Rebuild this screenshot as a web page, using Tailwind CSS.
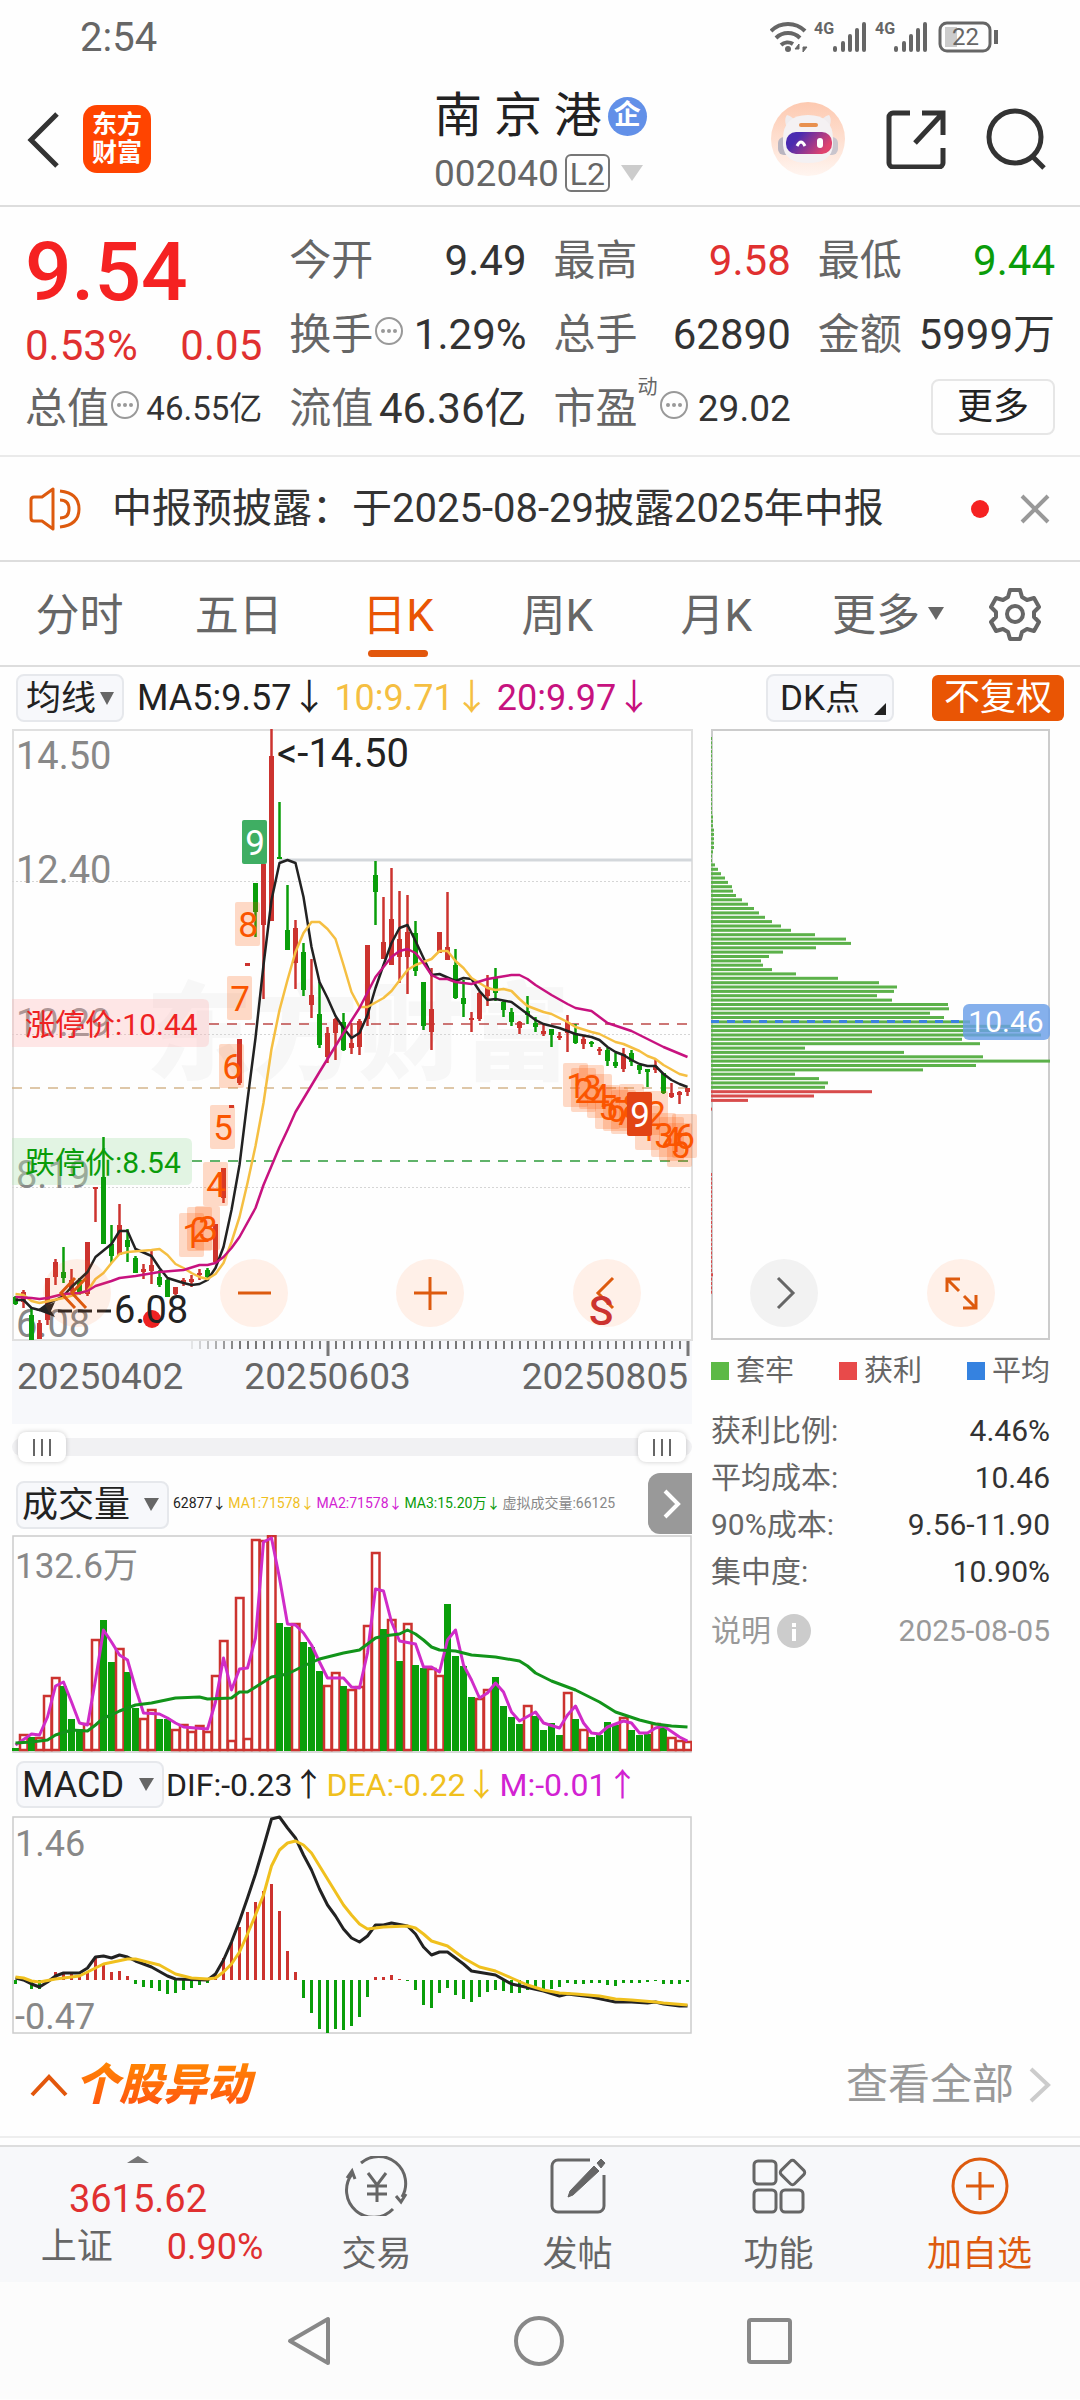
<!DOCTYPE html>
<html lang="zh-CN">
<head>
  <meta charset="UTF-8">
  <meta name="viewport" content="width=device-width, initial-scale=1.0">
  <title>南京港 002040</title>
  <script src="https://cdn.jsdelivr.net/npm/@tailwindcss/browser@4"></script>
</head>
<body class="bg-[#fefefe] text-[#333] font-['Roboto','Noto_Sans_CJK_SC',sans-serif]">

  <!-- status bar -->
  <div class="flex items-center justify-between h-[72px] pl-20 pr-20 pt-1 text-[#666]">
    <span class="text-[40px] leading-none">2:54</span>
    <svg class="w-[230px] h-10 mb-1" viewBox="770 16 230 40" fill="none" stroke="#666">
      <path d="M771 31a24 24 0 0 1 34 0M776 38a17 17 0 0 1 24 0M781 45a10 10 0 0 1 12 -1" stroke-width="4"/>
      <circle cx="788" cy="49" r="3" fill="#666" stroke="none"/>
      <path d="M799 44l-4 5h4zM803 52l4-5h-4z" fill="#666" stroke-width="1"/>
      <g stroke-width="4" stroke-linecap="round">
        <path d="M835 50v-2M843 50v-7M850 50V36M857 50V30M864 50V24"/>
        <path d="M896 50v-2M904 50v-7M911 50V36M918 50V30M925 50V24"/>
      </g>
      <g fill="#666" stroke="none" font-size="16" font-weight="700">
        <text x="814" y="34">4G</text>
        <text x="875" y="34">4G</text>
      </g>
      <rect x="945" y="27" width="12" height="20" fill="#ccc" stroke="none"/>
      <rect x="940" y="23" width="50" height="28" rx="7" stroke-width="3"/>
      <path d="M996 30v14" stroke-width="4"/>
      <text x="952" y="45" font-size="24" fill="#666" stroke="none">22</text>
    </svg>
  </div>

  <!-- header -->
  <header class="relative flex items-center justify-between h-[135px] px-6 border-b-2 border-[#ddd]">
    <div class="flex items-center">
      <button aria-label="返回" class="w-[59px]">
        <svg class="w-[38px] h-[60px]" viewBox="0 0 38 60" fill="none" stroke="#333" stroke-width="5"><path d="M33 5L7 31l26 26"/></svg>
      </button>
      <a href="#" class="w-[68px] h-[68px] rounded-[14px] bg-[#ff4400] text-white text-[25px] leading-[28px] font-bold text-center pt-[6px]">东方<br>财富</a>
    </div>
    <div class="absolute left-1/2 -translate-x-1/2 top-[16px] w-[212px]">
      <h1 class="flex items-center text-[48px] leading-[56px] text-[#222] whitespace-nowrap">南 京 港<span class="ml-[6px] w-[39px] h-[39px] shrink-0 rounded-full bg-[#6290e8] text-white text-[27px] leading-[37px] text-center font-bold">企</span></h1>
      <button class="flex items-center h-[58px] text-[37px] leading-none text-[#666]">
        002040
        <span class="ml-[6px] px-[3px] h-[38px] leading-[36px] text-[32px] border-2 border-[#777] rounded-md">L2</span>
        <svg class="ml-[11px] w-[22px] h-4" viewBox="0 0 22 16"><path d="M0 0h22L11 16z" fill="#ccc"/></svg>
      </button>
    </div>
    <div class="flex items-center gap-[40px]">
      <button aria-label="智能助手">
        <svg class="w-[76px] h-[76px]" viewBox="0 0 76 76">
          <defs>
            <linearGradient id="halo" x2="0" y2="1"><stop stop-color="#fdc9b0"/><stop offset="1" stop-color="#fff5f0"/></linearGradient>
            <linearGradient id="visor" x2="1" y2="0.4"><stop offset="0.3" stop-color="#4a2bb0"/><stop offset="1" stop-color="#e0436e"/></linearGradient>
          </defs>
          <circle cx="38" cy="38" r="37" fill="url(#halo)"/>
          <path d="M18 28c-4-6-3-12-1-14 4 1 7 4 9 7M58 28c4-6 3-12 1-14-4 1-7 4-9 7" fill="#f0ecee"/>
          <rect x="8" y="36" width="14" height="18" rx="6" fill="#b9b5c0"/><rect x="54" y="36" width="14" height="18" rx="6" fill="#c9c5cd"/>
          <path d="M13 38q0-24 25-24t25 24v6q-1 18-25 18T13 44z" fill="#f4f1f3"/>
          <rect x="29" y="22" width="19" height="4" rx="2" fill="#e8904f"/>
          <rect x="16" y="31" width="46" height="22" rx="10" fill="url(#visor)"/>
          <path d="M27 45q4-8 8 0" fill="none" stroke="#fff" stroke-width="3"/>
          <rect x="47" y="37" width="6" height="10" rx="3" fill="#fff"/>
        </svg>
      </button>
      <button aria-label="分享">
        <svg class="w-[60px] h-[60px]" viewBox="0 0 60 60" fill="none" stroke="#333" stroke-width="5"><path d="M24 4H7a4 4 0 0 0-4 4v46a4 4 0 0 0 4 4h46a4 4 0 0 0 4-4V39M36 4h21v22M56 5L29 34"/></svg>
      </button>
      <button aria-label="搜索" class="mr-1">
        <svg class="w-[62px] h-[62px] mr-1" viewBox="0 0 62 62" fill="none" stroke="#333" stroke-width="5"><circle cx="29" cy="29" r="26"/><path d="M46 48l12 12"/></svg>
      </button>
    </div>
  </header>

  <!-- quote -->
  <section class="relative grid grid-cols-4 gap-x-[27px] px-[25px] pt-[17px] h-[250px] border-b-2 border-[#eaeaea] text-[42px] leading-[74px] text-[#666]">
    <div class="flex flex-col">
      <div class="h-[93px] text-[82px] leading-[96px] font-medium text-[#f52222]">9.54</div>
      <div class="flex justify-between h-[55px] leading-[58px] text-[#e03030]"><span>0.53%</span><span>0.05</span></div>
      <div class="flex items-center justify-between whitespace-nowrap">
        <span class="flex items-center">总值<svg class="w-[30px] h-[30px] mb-2 ml-px" viewBox="0 0 30 30"><circle cx="15" cy="15" r="13" fill="none" stroke="#999" stroke-width="2"/><g fill="#999"><circle cx="9" cy="15" r="2"/><circle cx="15" cy="15" r="2"/><circle cx="21" cy="15" r="2"/></g></svg></span>
        <span class="text-[33px] text-[#333]">46.55亿</span>
      </div>
    </div>
    <div>
      <div class="flex justify-between"><span>今开</span><span class="text-[#333]">9.49</span></div>
      <div class="flex items-center justify-between">
        <span class="flex items-center">换手<svg class="w-[30px] h-[30px] mb-2 ml-px" viewBox="0 0 30 30"><circle cx="15" cy="15" r="13" fill="none" stroke="#999" stroke-width="2"/><g fill="#999"><circle cx="9" cy="15" r="2"/><circle cx="15" cy="15" r="2"/><circle cx="21" cy="15" r="2"/></g></svg></span>
        <span class="text-[#333]">1.29%</span>
      </div>
      <div class="flex justify-between whitespace-nowrap"><span>流值</span><span class="text-[#333]">46.36亿</span></div>
    </div>
    <div>
      <div class="flex justify-between"><span>最高</span><span class="text-[#e03030]">9.58</span></div>
      <div class="flex justify-between"><span>总手</span><span class="text-[#333]">62890</span></div>
      <div class="flex items-center justify-between">
        <span class="flex items-center">市盈<sup class="text-[20px] leading-none mb-6">动</sup><svg class="w-[30px] h-[30px] mb-2 ml-px" viewBox="0 0 30 30"><circle cx="15" cy="15" r="13" fill="none" stroke="#999" stroke-width="2"/><g fill="#999"><circle cx="9" cy="15" r="2"/><circle cx="15" cy="15" r="2"/><circle cx="21" cy="15" r="2"/></g></svg></span>
        <span class="text-[37px] text-[#333]">29.02</span>
      </div>
    </div>
    <div>
      <div class="flex justify-between"><span>最低</span><span class="text-[#0a9c0a]">9.44</span></div>
      <div class="flex justify-between whitespace-nowrap"><span>金额</span><span class="text-[#333]">5999万</span></div>
      <div class="flex items-center justify-end h-[70px]"><button class="w-[124px] h-[56px] text-[36px] leading-[50px] text-[#222] border-2 border-[#e6e6e6] rounded-lg">更多</button></div>
    </div>
  </section>

  <!-- notice -->
  <section class="flex items-center h-[105px] pl-[29px] pr-[29px] border-b-2 border-[#ddd]">
    <svg class="w-[54px] h-[46px]" viewBox="0 0 54 46" fill="none" stroke="#dd5a0e" stroke-width="3"><path d="M2 14q0-3 3-3h8L24 3v40L13 35H5q-3 0-3-3z" stroke-linejoin="round"/><path d="M31 14q9 0 9 9t-9 9M31 5q19 2 19 18T31 41"/></svg>
    <a href="#" class="ml-[29px] text-[40px] leading-none text-[#333] whitespace-nowrap">中报预披露：于2025-08-29披露2025年中报</a>
    <span class="ml-auto w-[18px] h-[18px] rounded-full bg-[#f52222]"></span>
    <button aria-label="关闭" class="ml-[30px]"><svg class="w-[32px] h-[32px]" viewBox="0 0 32 32" stroke="#999" stroke-width="4"><path d="M3 3l26 26M29 3L3 29"/></svg></button>
  </section>

  <!-- period tabs -->
  <nav class="flex items-center h-[105px] border-b-2 border-[#ddd] text-[44px] leading-none text-[#666]">
    <div class="flex flex-1 h-full pr-1">
      <button class="flex-1 pt-1">分时</button>
      <button class="flex-1 pt-1">五日</button>
      <button class="relative flex-1 pt-1 text-[#e95504]">日K<span class="absolute bottom-[8px] left-1/2 -ml-[30px] w-[60px] h-[7px] rounded-full bg-[#e2570c]"></span></button>
      <button class="flex-1 pt-1">周K</button>
      <button class="flex-1 pt-1">月K</button>
    </div>
    <button class="flex items-center w-[188px] pt-1 pl-[32px]">更多<svg class="ml-2 mb-1 w-[16px] h-[13px]" viewBox="0 0 16 13"><path d="M0 0h16L8 13z" fill="#666"/></svg></button>
    <button aria-label="设置" class="w-[92px]">
      <svg class="w-[54px] h-[54px]" viewBox="0 0 54 54" fill="none" stroke="#666" stroke-width="4" stroke-linejoin="round"><path d="M22 3h10l2 7 5 3 7-2 5 9-5 5v5l5 5-5 9-7-2-5 3-2 7H22l-2-7-5-3-7 2-5-9 5-5v-5l-5-5 5-9 7 2 5-3z"/><circle cx="27" cy="27" r="8"/></svg>
    </button>
  </nav>

  <!-- moving averages -->
  <div class="flex items-center h-[62px] pl-4 pr-4 text-[36px] leading-none whitespace-nowrap">
    <label class="relative flex items-center w-[108px] h-[48px] bg-[#f7f8fb] border-2 border-[#e6e8ec] rounded-lg">
      <select aria-label="主图指标" class="appearance-none w-full h-full pl-2 text-[35px] leading-none text-[#222]"><option>均线</option></select>
      <svg class="absolute right-2 w-[14px] h-[13px] pointer-events-none" viewBox="0 0 14 13"><path d="M0 0h14L7 13z" fill="#666"/></svg>
    </label>
    <span class="ml-[13px] text-[#222]">MA5:9.57↓</span>
    <span class="ml-[7px] text-[#f5bf42]">10:9.71↓</span>
    <span class="ml-[7px] text-[#c7127f]">20:9.97↓</span>
    <label class="relative flex items-center ml-auto w-[128px] h-[48px] bg-[#f7f8fb] border-2 border-[#e6e8ec] rounded-lg">
      <select aria-label="DK点" class="appearance-none w-full h-full pl-3 text-[35px] leading-none text-[#222]"><option>DK点</option></select>
      <svg class="absolute right-[6px] bottom-[5px] w-[12px] h-[12px] pointer-events-none" viewBox="0 0 12 12"><path d="M12 0v12H0z" fill="#222"/></svg>
    </label>
    <button class="ml-[38px] w-[132px] h-[46px] bg-[#e95504] text-white text-[36px] leading-[44px] rounded-md">不复权</button>
  </div>

  <main class="grid grid-cols-[680fr_339fr] gap-x-[19px] pl-3 pr-[30px]">
    <div>
      <!-- candles -->
      <div class="relative">
        <svg id="candles" class="block w-full h-auto overflow-visible" viewBox="0 0 680 611">
          <text x="134" y="342" font-size="106" font-weight="900" fill="#f7f7f7">东方财富</text>
          <rect x="1" y="1" width="679" height="610" fill="none" stroke="#e0e0e0" stroke-width="2"/>
          <path d="M0 152.500H680M0 305.500H680M0 458.500H680" stroke="#d5d5d5" stroke-dasharray="2 2"/>
          <path d="M267 131H680" stroke="#d3d7db" stroke-width="3"/>
          <path d="M197 295H680" stroke="#bd4a48" stroke-width="1.500" stroke-dasharray="10 8"/>
          <path d="M0 359H680" stroke="#d3b58c" stroke-width="1.500" stroke-dasharray="10 8"/>
          <path d="M180 432H680" stroke="#2c9a3a" stroke-width="1.500" stroke-dasharray="10 8"/>
          <g fill="#888" font-size="38">
            <text x="4" y="40">14.50</text>
            <text x="4" y="154">12.40</text>
            <text x="4" y="307">10.29</text>
            <text x="4" y="459">8.19</text>
            <text x="4" y="608">6.08</text>
          </g>
          <path d="M0 270h191q6 0 6 6v36q0 6-6 6H0z" fill="#ffb5b5" fill-opacity=".32"/>
          <path d="M0 409h174q6 0 6 6v35q0 6-6 6H0z" fill="#b5e5b8" fill-opacity=".38"/>
          <g id="candle-marks"></g>
          <text x="13" y="306" font-size="30" fill="#ee2222">涨停价:10.44</text>
          <text x="13" y="444" font-size="30" fill="#0a9c0a">跌停价:8.54</text>
          <circle cx="140" cy="590" r="9" fill="#ee2222"/>
          <g fill="#222">
            <text x="265" y="38" font-size="40">&lt;-14.50</text>
            <text x="102" y="594" font-size="38">6.08</text>
            <path d="M24 581l19-8-4 9 4 6z"/>
          </g>
          <path d="M46 582h14m6 0h14m5 0h14" stroke="#222" stroke-width="3"/>
        </svg>
        <div class="absolute inset-x-0 bottom-[13px] flex justify-between pl-[31px] pr-[51px]">
          <button aria-label="更早" class="w-[68px] h-[68px] rounded-full bg-[#ff6a1f]/10"><svg viewBox="0 0 68 68" fill="none" stroke="#dd5a0e" stroke-width="3"><path d="M32 19L18 34l14 15M43 19L29 34l14 15"/></svg></button>
          <button aria-label="缩小" class="w-[68px] h-[68px] rounded-full bg-[#fff0e8]"><svg viewBox="0 0 68 68" stroke="#dd5a0e" stroke-width="3"><path d="M18 34h33"/></svg></button>
          <button aria-label="放大" class="w-[68px] h-[68px] rounded-full bg-[#fff0e8]"><svg viewBox="0 0 68 68" stroke="#dd5a0e" stroke-width="3"><path d="M18 34h33M34 18v33"/></svg></button>
          <button aria-label="向左" class="relative w-[68px] h-[68px] rounded-full bg-[#fff0e8]"><svg viewBox="0 0 68 68" fill="none" stroke="#dd5a0e" stroke-width="3"><path d="M40 19L25 34l15 15"/></svg><span class="absolute left-[16px] bottom-[-5px] text-[40px] leading-[40px] font-medium text-[#cc332f]">S</span></button>
        </div>
      </div>

      <div class="bg-[#f7f8fb] h-[84px]">
        <svg id="ticks" class="block w-full h-4" viewBox="0 0 680 16" preserveAspectRatio="none"></svg>
        <div class="flex pl-[5px] pr-[4px] text-[37px] leading-[42px] text-[#666]">
          <span>20250402</span><span class="ml-[61px]">20250603</span><span class="ml-auto">20250805</span>
        </div>
      </div>

      <!-- range -->
      <div class="relative flex items-center h-[46px]">
        <div class="w-full h-[18px] rounded-full bg-[#f1f1f3]"></div>
        <input type="range" aria-label="起始日期" value="0" class="absolute left-[6px] right-[6px] w-[calc(100%-12px)] appearance-none bg-transparent pointer-events-none [&::-webkit-slider-thumb]:pointer-events-auto [&::-webkit-slider-thumb]:appearance-none [&::-webkit-slider-thumb]:w-12 [&::-webkit-slider-thumb]:h-[30px] [&::-webkit-slider-thumb]:rounded-lg [&::-webkit-slider-thumb]:bg-white [&::-webkit-slider-thumb]:shadow-[0_0_5px_#0003] [&::-webkit-slider-thumb]:bg-[linear-gradient(90deg,#666_0_2px,transparent_2px_8px,#666_8px_10px,transparent_10px_16px,#666_16px_18px)] [&::-webkit-slider-thumb]:bg-[length:18px_17px] [&::-webkit-slider-thumb]:bg-no-repeat [&::-webkit-slider-thumb]:bg-center">
        <input type="range" aria-label="结束日期" value="100" class="absolute left-[6px] right-[6px] w-[calc(100%-12px)] appearance-none bg-transparent pointer-events-none [&::-webkit-slider-thumb]:pointer-events-auto [&::-webkit-slider-thumb]:appearance-none [&::-webkit-slider-thumb]:w-12 [&::-webkit-slider-thumb]:h-[30px] [&::-webkit-slider-thumb]:rounded-lg [&::-webkit-slider-thumb]:bg-white [&::-webkit-slider-thumb]:shadow-[0_0_5px_#0003] [&::-webkit-slider-thumb]:bg-[linear-gradient(90deg,#666_0_2px,transparent_2px_8px,#666_8px_10px,transparent_10px_16px,#666_16px_18px)] [&::-webkit-slider-thumb]:bg-[length:18px_17px] [&::-webkit-slider-thumb]:bg-no-repeat [&::-webkit-slider-thumb]:bg-center">
      </div>

      <!-- volume -->
      <div class="flex items-center h-[65px] pl-1 text-[14px] leading-none whitespace-nowrap">
        <label class="relative flex items-center w-[153px] h-[48px] mt-1 bg-[#f7f8fb] border-2 border-[#e6e8ec] rounded-lg">
          <select aria-label="副图一" class="appearance-none w-full h-full pl-1 text-[36px] leading-none text-[#222]"><option>成交量</option></select>
          <svg class="absolute right-2 w-[15px] h-[13px] pointer-events-none" viewBox="0 0 15 13"><path d="M0 0h15L7 13z" fill="#666"/></svg>
        </label>
        <span class="ml-1 text-[#222]">62877↓</span>
        <span class="ml-[2px] text-[#f0c01e]">MA1:71578↓</span>
        <span class="ml-[2px] text-[#d222d2]">MA2:71578↓</span>
        <span class="ml-[2px] text-[#0a9c0a]">MA3:15.20万↓</span>
        <span class="ml-[2px] text-[#888]">虚拟成交量:66125</span>
        <button aria-label="收起" class="ml-auto self-start mt-[3px] w-[44px] h-[61px] rounded-l-xl bg-[#999]"><svg viewBox="0 0 44 61" fill="none" stroke="#fff" stroke-width="4"><path d="M17 18l13 13-13 13"/></svg></button>
      </div>
      <svg id="volume" class="block w-full h-auto" viewBox="0 0 680 218">
        <rect x="1" y="1" width="678" height="216" fill="none" stroke="#ccc" stroke-width="1.500"/>
        <text x="3" y="43" font-size="35" fill="#888">132.6万</text>
      </svg>

      <!-- macd -->
      <div class="flex items-center h-[63px] pl-1 text-[32px] leading-none whitespace-nowrap">
        <label class="relative flex items-center w-[148px] h-[47px] bg-[#f7f8fb] border-2 border-[#e6e8ec] rounded-lg">
          <select aria-label="副图二" class="appearance-none w-full h-full pl-1 text-[36px] leading-none text-[#222]"><option>MACD</option></select>
          <svg class="absolute right-2 w-[15px] h-[13px] pointer-events-none" viewBox="0 0 15 13"><path d="M0 0h15L7 13z" fill="#666"/></svg>
        </label>
        <span class="ml-[2px] text-[#222]">DIF:-0.23↑</span>
        <span class="ml-[2px] text-[#f0c01e]">DEA:-0.22↓</span>
        <span class="ml-[2px] text-[#d222d2]">M:-0.01↑</span>
      </div>
      <svg id="macd" class="block w-full h-auto overflow-visible" viewBox="0 0 680 218">
        <rect x="1" y="1" width="678" height="216" fill="none" stroke="#ccc" stroke-width="1.500"/>
        <text x="3" y="40" font-size="36" fill="#888">1.46</text>
        <text x="3" y="213" font-size="36" fill="#888">-0.47</text>
      </svg>
    </div>

    <!-- cost distribution -->
    <aside>
      <div class="relative">
        <svg id="chips" class="block w-full h-auto" viewBox="0 0 339 611">
          <rect x="1" y="1" width="337" height="609" fill="none" stroke="#ccc" stroke-width="2"/>
          <g id="chip-bars"></g>
          <path d="M0 292.500H252" stroke="#3a82e0" stroke-width="3" stroke-dasharray="8 8"/>
          <rect x="252" y="275" width="87" height="36" rx="6" fill="#6a9fe8" fill-opacity=".82"/>
          <text x="295" y="303" font-size="30" text-anchor="middle" fill="#fff">10.46</text>
        </svg>
        <div class="absolute inset-x-0 bottom-[13px] flex justify-between pl-[39px] pr-[55px]">
          <button aria-label="向右" class="w-[68px] h-[68px] rounded-full bg-[#f2f2f2]"><svg viewBox="0 0 68 68" fill="none" stroke="#666" stroke-width="3"><path d="M28 19l15 15-15 15"/></svg></button>
          <button aria-label="全屏" class="w-[68px] h-[68px] rounded-full bg-[#fff0e8]"><svg viewBox="0 0 68 68" fill="none" stroke="#dd5a0e" stroke-width="3"><path d="M20 33V20h13M20 20l12 12M36 49h13V36M49 49L37 37"/></svg></button>
        </div>
      </div>
      <div class="flex justify-between items-center h-[62px] text-[29px] leading-none text-[#666]">
        <span class="flex items-center gap-[7px]"><i class="w-[18px] h-[18px] bg-[#5cb946]"></i>套牢</span>
        <span class="flex items-center gap-[7px]"><i class="w-[18px] h-[18px] bg-[#e84a4a]"></i>获利</span>
        <span class="flex items-center gap-[7px]"><i class="w-[18px] h-[18px] bg-[#3582e0]"></i>平均</span>
      </div>
      <dl class="grid grid-cols-[auto_1fr] pt-[5px] text-[30px] leading-[47px] text-[#666]">
        <dt>获利比例:</dt><dd class="text-right text-[#333]">4.46%</dd>
        <dt>平均成本:</dt><dd class="text-right text-[#333]">10.46</dd>
        <dt>90%成本:</dt><dd class="text-right text-[#333]">9.56-11.90</dd>
        <dt>集中度:</dt><dd class="text-right text-[#333]">10.90%</dd>
      </dl>
      <div class="flex items-center justify-between h-[72px] text-[30px] leading-none text-[#999]">
        <button class="flex items-center gap-[6px]">说明<svg class="w-[35px] h-[35px]" viewBox="0 0 35 35"><circle cx="17" cy="17" r="17" fill="#ccc"/><path d="M17 9v4M17 15v12" stroke="#fff" stroke-width="4"/></svg></button>
        <span>2025-08-05</span>
      </div>
    </aside>
  </main>

  <section class="flex items-center justify-between h-[104px] pl-[30px] pr-[28px] border-b-2 border-[#eee]">
    <h2 class="flex items-center text-[44px] leading-[56px] font-black italic">
      <svg class="w-[38px] h-[24px] mr-[7px]" viewBox="0 0 38 24" fill="none" stroke="#e2570c" stroke-width="4"><path d="M2 22L19 4l17 18"/></svg>
      <span class="pr-2 bg-linear-to-b from-[#ff8a00] to-[#ff4a10] bg-clip-text text-transparent">个股异动</span>
    </h2>
    <a href="#" class="flex items-center text-[42px] leading-none text-[#999]">查看全部<svg class="ml-[14px] w-[24px] h-[38px]" viewBox="0 0 24 38" fill="none" stroke="#ccc" stroke-width="4"><path d="M3 3l17 16L3 35"/></svg></a>
  </section>

  <!-- bottom bar -->
  <footer class="flex mt-[7px] h-[137px] bg-[#f7f8fa] border-t-2 border-[#ddd] text-[35px] leading-[42px] text-[#666]">
    <button class="flex flex-col items-center w-[276px] pt-[9px]">
      <svg class="w-[22px] h-[7px]" viewBox="0 0 22 7"><path d="M0 7h22L11 0z" fill="#777"/></svg>
      <span class="mt-[13px] text-[38px] leading-[46px] text-[#e03030]">3615.62</span>
      <span class="flex gap-[54px] mt-[2px] pl-7 text-[36px] leading-[46px]">上证<span class="text-[#e03030]">0.90%</span></span>
    </button>
    <button class="flex flex-col items-center flex-1 pt-[9px]">
      <svg class="w-[66px] h-[60px]" viewBox="0 0 66 60" fill="none" stroke="#666" stroke-width="3"><path d="M17 7a27 27 0 0 1 41 34M62 38l-5 8-5-6M49 53A27 27 0 0 1 8 18M3 22l5-7 3 8"/><path d="M24 17l9 12 9-12M33 29v17M23 30h20M23 38h20"/></svg>
      <span class="mt-[18px]">交易</span>
    </button>
    <button class="flex flex-col items-center flex-1 pt-[9px]">
      <svg class="w-[60px] h-[60px]" viewBox="0 0 60 60" fill="none" stroke="#666" stroke-width="3"><path d="M42 4H10a6 6 0 0 0-6 6v40a6 6 0 0 0 6 6h40a6 6 0 0 0 6-6V19"/><path d="M46 10l5 5-26 24-5 2 2-6zM49 7l4-4 4 4-4 5z" fill="#666" stroke-width="1"/></svg>
      <span class="mt-[18px]">发帖</span>
    </button>
    <button class="flex flex-col items-center flex-1 pt-[9px]">
      <svg class="w-[60px] h-[60px]" viewBox="0 0 60 60" fill="none" stroke="#666" stroke-width="3"><rect x="5" y="5" width="22" height="23" rx="4"/><rect x="5" y="34" width="22" height="22" rx="4"/><rect x="32" y="34" width="22" height="22" rx="4"/><rect x="34" y="7" width="19" height="19" rx="3" transform="rotate(45 43.500 16.500)"/></svg>
      <span class="mt-[18px]">功能</span>
    </button>
    <button class="flex flex-col items-center flex-1 pt-[9px] text-[#dd5a0e]">
      <svg class="w-[60px] h-[60px]" viewBox="0 0 60 60" fill="none" stroke="#dd5a0e" stroke-width="3"><circle cx="30" cy="30" r="27"/><path d="M16 30h28M30 16v28"/></svg>
      <span class="mt-[18px]">加自选</span>
    </button>
  </footer>

  <!-- system keys -->
  <div class="flex items-center justify-between h-[117px] pl-[286px] pr-[286px] bg-[#fcfcfc]">
    <button aria-label="后退"><svg class="w-[46px] h-[52px]" viewBox="0 0 46 52" fill="none" stroke="#888" stroke-width="4" stroke-linejoin="round"><path d="M42 4v44L4 26z"/></svg></button>
    <button aria-label="主页"><svg class="w-[52px] h-[52px]" viewBox="0 0 52 52" fill="none" stroke="#888" stroke-width="4"><circle cx="26" cy="26" r="23"/></svg></button>
    <button aria-label="最近任务"><svg class="w-[48px] h-[48px]" viewBox="0 0 48 48" fill="none" stroke="#888" stroke-width="4"><rect x="3" y="3" width="41" height="42" rx="2"/></svg></button>
  </div>

  <script>
    const RED = '#cc332f';
    const GREEN = '#0a9e0a';
    const x = i => 3.5 + i * 8;
    const el = id => document.getElementById(id);

    // "index:value" pairs -> polyline
    function line(pairs, y, color, width = 2.5) {
      const pts = pairs.split(' ').map(p => {
        const [i, v] = p.split(':').map(Number);
        return x(i) + ',' + y(v);
      }).join(' ');
      return `<polyline points="${pts}" fill="none" stroke="${color}" stroke-width="${width}" stroke-linejoin="round"/>`;
    }

    // colour, high, body top, body bottom, low
    const candles = `g567,568,575,576 r561,563,573,579 g578,586,611,611 r591,594,610,610 r549,549,591,596 r530,533,548,556
      g518,543,549,554 r540,551,562,563 g549,551,564,566 r513,513,565,567 r458,458,460,493 g408,448,515,515
      g496,515,527,534 r475,496,526,526 g500,511,518,533 g527,529,544,544 r535,540,543,550 r522,536,542,555
      g541,548,556,558 g550,551,568,568 r558,558,565,566 r549,551,554,557 r546,550,553,558 r540,544,545,551
      g539,541,548,549 r495,495,533,533 r439,439,469,474 r376,376,379,379 r310,310,354,356 r234,234,237,237
      g154,154,183,208 r135,135,196,270 r0,27,192,192 g73,128,130,130 g156,201,221,221 r191,199,234,260
      g214,223,261,267 r230,266,276,289 g253,285,316,319 r298,304,328,334 r289,290,304,331 g284,293,321,322
      r294,314,319,325 r290,292,318,326 r216,216,290,297 g132,146,163,196 r168,213,230,230 r139,190,236,236
      r162,210,228,254 r166,203,228,265 g192,204,242,247 g253,253,297,301 r239,280,303,321 r203,203,224,224
      r163,218,231,231 g220,236,269,270 g251,269,275,288 r283,289,290,303 r263,264,290,292 r246,258,267,277
      g239,248,264,272 g272,273,281,288 g279,283,293,297 r292,293,299,305 g267,282,286,295 g288,294,298,303
      r295,302,305,307 g300,300,306,318 r303,307,308,311 r286,293,304,323 g295,304,314,315 r307,310,315,320
      g312,313,315,318 r318,320,322,326 g319,321,332,337 g324,333,337,339 r319,325,340,343 g321,324,333,337
      g336,336,341,345 g340,340,343,358 r330,337,341,344 g344,344,364,365 r354,364,368,369 r362,363,366,375 r359,359,363,367`.split(/\s+/);

    // count badges: digit, x, y
    const badges = [
      [1, 167, 484], [2, 175, 478], [3, 183, 477], [4, 191, 433], [5, 198, 376], [6, 207, 315], [7, 215, 247], [8, 223, 173], [9, 230, 91, '#3fae63'],
      [1, 551, 334], [2, 559, 339], [3, 567, 336], [4, 575, 345], [5, 583, 356], [6, 591, 358], [7, 599, 361], [8, 607, 355],
      [1, 623, 377], [2, 631, 362], [3, 639, 384], [4, 647, 388], [5, 655, 394], [6, 660, 385], [9, 615, 363, '#e24414'],
    ];

    let out = '';
    candles.forEach((c, i) => {
      const color = c[0] === 'r' ? RED : GREEN;
      const [hi, top, bot, lo] = c.slice(1).split(',').map(Number);
      out += `<path d="M${x(i)} ${hi}V${lo}" stroke="${color}" stroke-width="2.500"/>`;
      out += `<rect x="${x(i) - 2.5}" y="${top}" width="5" height="${Math.max(bot - top, 2)}" fill="${color}"/>`;
    });
    badges.forEach(([n, bx, by, solid]) => {
      out += `<rect x="${bx}" y="${by}" width="25" height="44" rx="2" fill="${solid || '#ff5500'}" fill-opacity="${solid ? 1 : 0.22}"/>`;
      out += `<text x="${bx + 13}" y="${by + 35}" font-size="35" text-anchor="middle" fill="${solid ? '#fff' : '#fa5500'}">${n}</text>`;
    });
    const same = v => v;
    out += line('0:571 1:571 2:579 3:581 4:575 6:567 7:558 9:543 10:528 12:515 13:502 14:502 15:520 17:527 18:539 19:549 21:554 22:556 23:555 24:551 25:539 26:518 27:481 28:436 29:371 30:309 31:236 32:171 33:134 34:131 35:134 36:168 37:218 38:253 39:269 40:287 41:299 42:309 43:304 44:286 45:259 46:236 47:214 48:199 49:196 50:212 52:246 53:245 55:252 56:249 57:250 58:262 59:271 60:270 62:273 64:285 65:291 66:295 68:299 70:305 72:308 73:311 74:318 75:323 76:326 77:331 78:335 79:337 80:337 81:345 82:351 83:355 84:358', same, '#222');
    out += line('0:565 1:566 2:572 3:574 6:569 9:562 10:550 11:544 12:534 13:525 14:523 17:521 18:520 19:526 20:535 21:539 22:544 23:548 24:550 25:545 26:534 27:513 28:488 29:454 30:417 31:374 32:320 33:281 34:251 35:223 36:204 37:193 38:193 39:200 40:210 41:236 42:263 43:278 44:278 46:269 47:262 49:241 50:236 52:230 53:222 54:222 55:232 56:239 57:249 58:254 59:259 60:261 61:260 62:262 63:270 64:277 66:283 67:285 69:293 70:298 72:303 73:305 75:313 76:315 78:322 79:327 80:330 81:336 83:345 84:347', same, '#f5bf42');
    out += line('0:568 2:569 3:570 4:569 6:565 8:564 9:562 10:557 12:552 13:549 15:547 18:543 21:541 23:536 24:536 25:534 26:528 27:519 28:508 30:479 31:456 33:418 34:401 35:383 38:343 40:317 41:304 43:279 45:248 47:228 48:222 49:220 50:224 51:234 52:246 53:250 54:250 55:253 57:255 59:250 62:246 63:246 64:250 65:256 67:266 69:275 70:279 72:282 74:294 77:302 79:310 81:318 84:328', same, '#c7127f');
    el('candle-marks').innerHTML = out;

    // date ticks fade in from the left
    out = '';
    for (let k = 0; k < 63; k++) {
      const major = k === 17 || k === 62;
      out += `<path d="M${180 + k * 8} 0v${major ? 16 : 9}" stroke="#777" stroke-width="${major ? 3 : 2}" opacity="${Math.min(1, 0.15 + k * 0.14)}"/>`;
    }
    el('ticks').innerHTML = out;

    const volumes = 'g3 r17 g14 r14 r56 r74 g65 g32 g22 r28 r112 g131 g89 r103 g79 g43 r33 r42 g32 g32 r22 r27 r20 r26 r20 r76 r111 r11 r154 r13 r212 r211 r216 g128 g124 r128 g109 g104 g80 r66 r79 g65 r62 r65 r126 r199 g122 r132 g90 r128 g86 g83 r83 r76 g147 g95 g85 g54 r53 r62 g74 g45 g34 g27 r46 g35 g21 g28 g16 r59 g32 r22 g14 g16 g29 g26 r34 g21 g16 g17 r28 g24 r14 r11 r10'.split(' ');
    const up = h => 216 - h;
    out = '';
    volumes.forEach((v, i) => {
      const h = Number(v.slice(1));
      out += v[0] === 'g'
        ? `<rect x="${x(i) - 3.5}" y="${up(h)}" width="7" height="${h}" fill="${GREEN}"/>`
        : `<rect x="${x(i) - 3.5}" y="${up(h) + 1}" width="7.500" height="${h - 2}" fill="#fff" stroke="${RED}" stroke-width="2.500"/>`;
    });
    out += line('0:6 2:17 3:16 4:34 5:65 6:69 7:49 8:28 9:26 10:71 11:121 12:109 13:96 14:91 15:63 16:38 18:37 19:33 20:28 21:24 24:22 25:49 26:93 27:61 28:82 29:83 30:113 31:209 32:213 33:173 34:127 35:126 36:118 37:106 38:89 39:73 41:73 42:64 43:63 44:98 45:162 46:160 47:129 48:110 50:107 51:84 52:84 53:79 54:111 55:121 56:86 57:71 58:53 59:58 60:68 61:59 62:39 63:30 65:39 66:28 68:23 69:36 70:45 71:28 72:18 73:17 74:24 76:30 77:28 78:18 79:18 80:23 81:25 83:14 84:10', up, '#d02cc8', 3);
    out += line('0:8 2:9 4:11 5:16 7:21 9:20 10:26 11:33 12:36 13:40 15:46 17:48 20:53 23:54 24:52 27:53 28:59 29:59 31:69 32:74 34:77 36:85 38:92 41:98 43:101 45:113 46:115 48:117 49:121 50:117 51:111 52:104 53:101 55:100 57:96 60:94 63:90 64:85 65:78 67:70 70:61 73:49 75:39 78:31 80:27 82:25 84:24', up, '#12941a', 3);
    el('volume').innerHTML += out;

    const macd = [-4, -1, -9, -9, -1, 8, 7, 7, 5, 9, 22, 15, 8, 9, 4, -4, -7, -8, -11, -14, -13, -10, -8, -5, -3, 5, 22, 38, 53, 68, 78, 89, 96, 69, 29, 8, -18, -33, -49, -53, -49, -50, -46, -37, -17, 3, 3, 5, 1, -1, -10, -25, -28, -13, -8, -15, -19, -22, -17, -12, -10, -11, -13, -13, -10, -10, -9, -9, -7, -3, -4, -4, -3, -3, -5, -6, -3, -3, -3, -2, -1, -4, -4, -4, -2];
    out = '';
    macd.forEach((v, i) => {
      out += `<path d="M${x(i)} 164V${164 - v}" stroke="${v > 0 ? RED : GREEN}" stroke-width="3"/>`;
    });
    out += line('0:162 1:164 2:168 3:171 4:166 5:160 6:157 8:157 9:152 10:141 11:140 12:142 13:139 14:141 15:145 17:151 19:160 20:163 24:164 25:158 26:144 27:126 28:105 29:82 30:58 31:31 32:3 33:1 34:12 35:22 36:39 37:54 38:73 39:89 40:100 41:113 42:122 43:126 44:120 45:109 46:109 47:107 49:110 50:118 51:131 52:139 53:136 54:136 56:148 57:155 60:159 62:168 66:175 68:180 69:178 70:179 72:181 75:186 77:186 79:187 80:186 81:188 83:190 84:190', same, '#222', 3);
    out += line('0:161 1:162 2:165 3:166 5:163 8:160 10:152 11:148 14:143 15:143 18:149 20:158 22:162 24:163 25:162 26:156 27:148 28:136 29:118 30:99 31:79 32:50 33:34 34:27 35:25 36:29 37:37 38:50 39:63 41:89 42:99 43:108 44:113 46:111 49:110 50:112 51:118 52:125 54:130 56:142 58:151 60:155 62:162 64:169 66:174 68:177 70:178 73:180 75:183 77:184 80:186 81:187 84:189', same, '#f0c01e', 3);
    el('macd').innerHTML += out;

    const trapped = [1, 1, 1, 1, 1, 1, 1, 1, 1, 1, 1, 1, 1, 1, 1, 1, 1, 1, 2, 2, 2, 3, 3, 3, 3, 3, 2, 1, 1, 4, 7, 10, 14, 17, 21, 22, 25, 31, 37, 43, 48, 54, 61, 70, 80, 104, 135, 140, 105, 72, 58, 50, 52, 61, 85, 127, 168, 186, 183, 166, 181, 237, 238, 219, 233, 259, 317, 310, 330, 251, 269, 94, 193, 272, 339, 265, 212, 84, 108, 117, 114];
    const profit = [161, 103, 37, 0, 1, 0, 0, 0, 0, 0, 0, 0, 0, 0, 0, 0, 0, 0, 0, 1, 1, 1, 1, 1, 1, 1, 1, 1, 1, 1, 1, 1, 1, 1, 1, 1, 1, 1, 1, 1, 1, 1, 2, 1, 1, 1, 1];
    out = '';
    trapped.concat(profit).forEach((w, i) => {
      out += `<rect x="0" y="${(8 + i * 4.36).toFixed(1)}" width="${w}" height="3" fill="${i < trapped.length ? '#5cb14a' : '#d84c4c'}"/>`;
    });
    el('chip-bars').innerHTML = out;
  </script>
</body>
</html>
